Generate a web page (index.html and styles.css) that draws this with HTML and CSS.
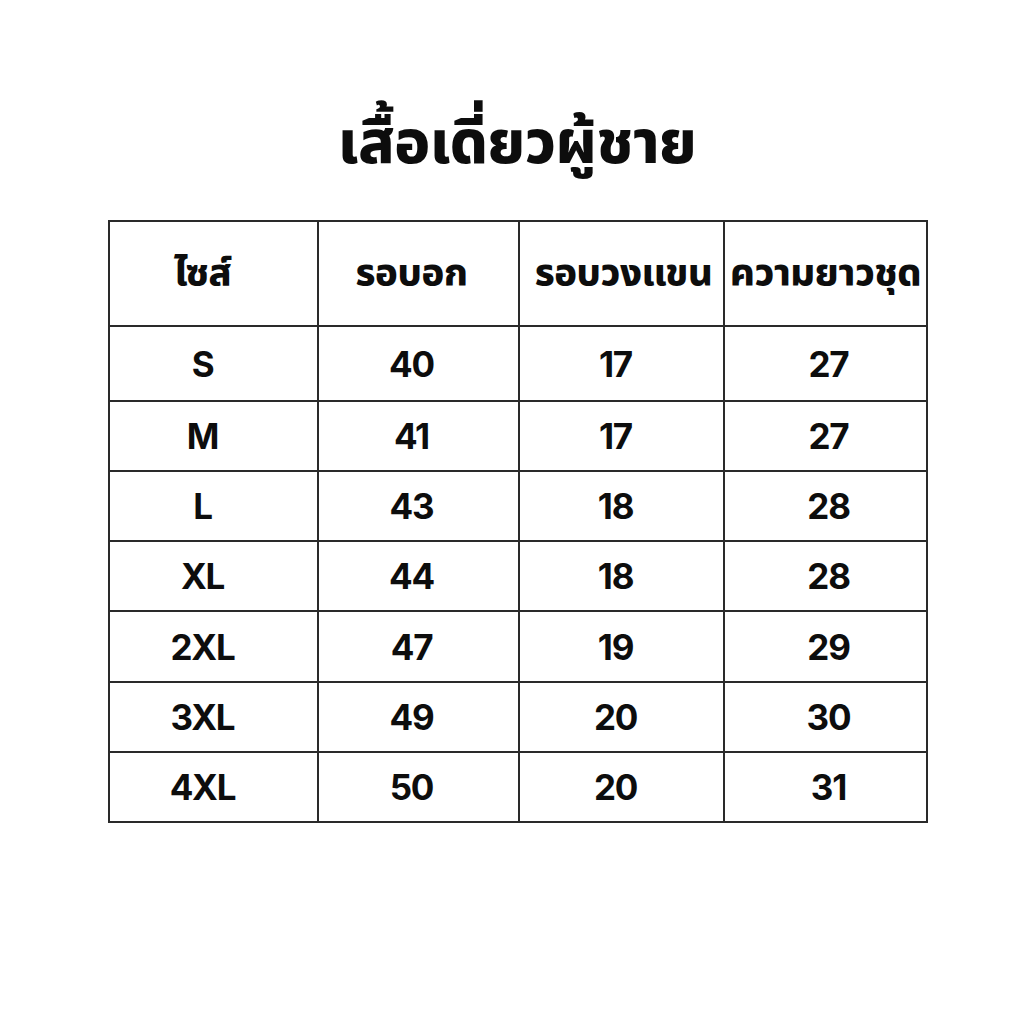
FILE: index.html
```html
<!DOCTYPE html>
<html lang="th">
<head>
<meta charset="utf-8">
<link rel="stylesheet" href="styles.css">
</head>
<body>
<main class="page">
  <h1 class="title">เสื้อเดี่ยวผู้ชาย</h1>
  <table class="size-table">
    <colgroup>
      <col class="c1"><col class="c2"><col class="c3"><col class="c4">
    </colgroup>
    <thead>
      <tr class="head">
        <th>ไซส์</th><th>รอบอก</th><th>รอบวงแขน</th><th>ความยาวชุด</th>
      </tr>
    </thead>
    <tbody>
      <tr class="r75"><td>S</td><td>40</td><td>17</td><td>27</td></tr>
      <tr class="r70"><td>M</td><td>41</td><td>17</td><td>27</td></tr>
      <tr class="r70"><td>L</td><td>43</td><td>18</td><td>28</td></tr>
      <tr class="r70"><td>XL</td><td>44</td><td>18</td><td>28</td></tr>
      <tr class="r71"><td>2XL</td><td>47</td><td>19</td><td>29</td></tr>
      <tr class="r70"><td>3XL</td><td>49</td><td>20</td><td>30</td></tr>
      <tr class="r70"><td>4XL</td><td>50</td><td>20</td><td>31</td></tr>
    </tbody>
  </table>
</main>
</body>
</html>
```
FILE: styles.css
```css
html, body {
  margin: 0;
  padding: 0;
  background: #ffffff;
}
body {
  width: 1024px;
  height: 1024px;
  font-family: "Noto Sans Thai", "Noto Sans", "Liberation Sans", sans-serif;
  color: #0d0d0d;
}
.page {
  display: flex;
  flex-direction: column;
  align-items: flex-start;
  padding-top: 100px;
}
.title {
  align-self: center;
  margin: 0 0 0 10px;
  font-size: 60px;
  font-weight: 800;
  line-height: 90px;
  letter-spacing: -0.5px;
}
.size-table {
  margin: 30px 0 0 108px;
  border-collapse: collapse;
  table-layout: fixed;
  width: 818px;
  border: 2px solid #2a2a2a;
}
.c1 { width: 209px; }
.c2 { width: 201px; }
.c3 { width: 205px; }
.c4 { width: 203px; }
th, td {
  border: 2px solid #2a2a2a;
  padding: 0;
  text-align: center;
  vertical-align: middle;
  font-weight: 700;
  white-space: nowrap;
}
th {
  font-size: 38px;
  font-weight: 800;
  letter-spacing: -0.4px;
}
td {
  font-family: "Inter", "Liberation Sans", sans-serif;
  font-size: 35px;
  letter-spacing: -1.2px;
}
.head { height: 105px; }
.r75 { height: 75px; }
.r70 { height: 70px; }
.r71 { height: 71px; }
th:nth-child(1), td:nth-child(1) { padding-right: 22px; }
th:nth-child(2), td:nth-child(2) { padding-right: 14px; }
th:nth-child(3) { padding-left: 4px; }
td:nth-child(3) { padding-right: 12px; }
td:nth-child(4) { padding-left: 6px; }
```
